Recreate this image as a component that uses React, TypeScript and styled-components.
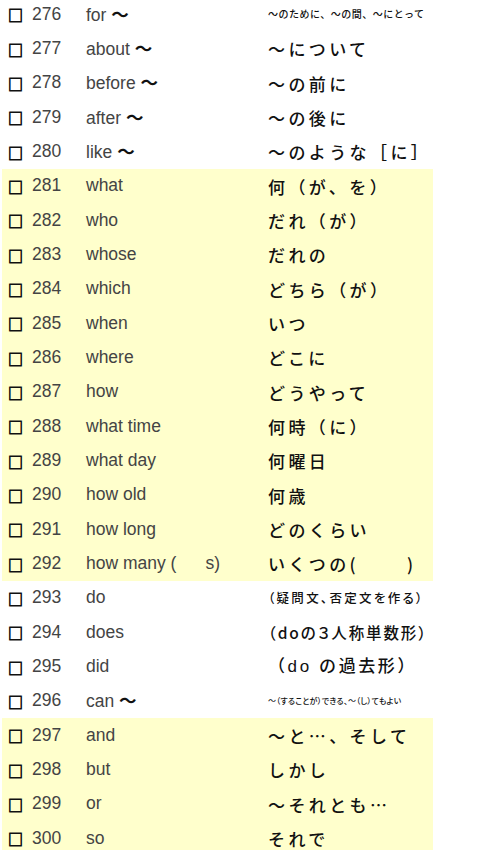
import React from "react";
import styled, { createGlobalStyle } from "styled-components";

const Global = createGlobalStyle`
  html, body { margin: 0; padding: 0; background: #ffffff; }
  body { font-family: "Liberation Sans", "Noto Sans CJK JP", sans-serif; }
`;

type Size = "xs" | "s" | "m" | "l" | "xl";

type Item = {
  no: number;
  en: string;
  ja: string;
  hl?: boolean;
  size?: Size;
};

const items: Item[] = [
  { no: 276, en: "for 〜", ja: "〜のために、〜の間、〜にとって", size: "xs" },
  { no: 277, en: "about 〜", ja: "〜について" },
  { no: 278, en: "before 〜", ja: "〜の前に" },
  { no: 279, en: "after 〜", ja: "〜の後に" },
  { no: 280, en: "like 〜", ja: "〜のような［に］" },
  { no: 281, en: "what", ja: "何（が、を）", hl: true },
  { no: 282, en: "who", ja: "だれ（が）", hl: true },
  { no: 283, en: "whose", ja: "だれの", hl: true },
  { no: 284, en: "which", ja: "どちら（が）", hl: true },
  { no: 285, en: "when", ja: "いつ", hl: true },
  { no: 286, en: "where", ja: "どこに", hl: true },
  { no: 287, en: "how", ja: "どうやって", hl: true },
  { no: 288, en: "what time", ja: "何時（に）", hl: true },
  { no: 289, en: "what day", ja: "何曜日", hl: true },
  { no: 290, en: "how old", ja: "何歳", hl: true },
  { no: 291, en: "how long", ja: "どのくらい", hl: true },
  { no: 292, en: "how many (      s)", ja: "いくつの(　　 )", hl: true },
  { no: 293, en: "do", ja: "（疑問文、否定文を作る）", size: "s" },
  { no: 294, en: "does", ja: "（doの３人称単数形）", size: "m" },
  { no: 295, en: "did", ja: "（do の過去形）", size: "l" },
  { no: 296, en: "can 〜", ja: "〜（することが）できる、〜（し）てもよい", size: "xs" },
  { no: 297, en: "and", ja: "〜と…、そして", hl: true },
  { no: 298, en: "but", ja: "しかし", hl: true },
  { no: 299, en: "or", ja: "〜それとも…", hl: true },
  { no: 300, en: "so", ja: "それで", hl: true },
];

const Sheet = styled.div`
  margin: -2.7px 0 0 2px;
  width: 431px;
  display: flex;
  flex-direction: column;
`;

const Row = styled.div<{ $hl?: boolean }>`
  height: 34.333px;
  display: grid;
  grid-template-columns: 84px 182px 1fr;
  align-items: center;
  background: ${(p) => (p.$hl ? "#ffffcc" : "transparent")};
`;

const NoCell = styled.div`
  display: flex;
  align-items: center;
  padding-left: 6px;
`;

const Box = styled.span`
  font-family: "Noto Sans CJK JP", sans-serif;
  font-size: 15px;
  color: #111;
  -webkit-text-stroke: 0.8px #111;
  line-height: 1;
  width: 16px;
  margin-top: 1px;
`;

const Num = styled.span`
  margin-left: 8px;
  font-family: "Liberation Sans", sans-serif;
  font-size: 17.5px;
  color: #444;
  line-height: 1;
`;

const En = styled.div`
  font-family: "Liberation Sans", "Noto Sans CJK JP", sans-serif;
  font-size: 17.5px;
  color: #444;
  white-space: pre;
  line-height: 1;
`;

const Tilde = styled.span`
  font-family: "Noto Sans CJK JP", sans-serif;
  font-weight: 700;
  color: #111;
`;

const jaStyles: Record<Size, string> = {
  xs: "font-size: 10px; letter-spacing: 0.5px;",
  s: "font-size: 12.5px; letter-spacing: 2.3px; font-feature-settings: 'palt';",
  m: "font-size: 15.5px; letter-spacing: 1.9px; font-feature-settings: 'palt';",
  l: "font-size: 17px; letter-spacing: 2.6px; font-family: 'Liberation Sans', 'Noto Sans CJK JP', sans-serif;",
  xl: "font-size: 17px; letter-spacing: 3.4px;",
};

const Ja = styled.div<{ $size: Size }>`
  font-family: "Noto Sans CJK JP", sans-serif;
  font-weight: 500;
  color: #111;
  white-space: pre;
  line-height: 1;
  ${(p) => jaStyles[p.$size]}
`;

const TinyJa = styled(Ja)`
  font-size: 8px;
  letter-spacing: 0.2px;
  font-feature-settings: "palt";
`;

function English({ text }: { text: string }) {
  const parts = text.split("〜");
  return (
    <En>
      {parts.map((p, i) => (
        <React.Fragment key={i}>
          {p}
          {i < parts.length - 1 && <Tilde>〜</Tilde>}
        </React.Fragment>
      ))}
    </En>
  );
}

export default function App() {
  return (
    <>
      <Global />
      <Sheet>
        {items.map((it) => (
          <Row key={it.no} $hl={it.hl}>
            <NoCell>
              <Box>□</Box>
              <Num>{it.no}</Num>
            </NoCell>
            <English text={it.en} />
            {it.no === 296 ? (
              <TinyJa $size="xs">{it.ja}</TinyJa>
            ) : (
              <Ja $size={it.size ?? "xl"}>{it.ja}</Ja>
            )}
          </Row>
        ))}
      </Sheet>
    </>
  );
}
